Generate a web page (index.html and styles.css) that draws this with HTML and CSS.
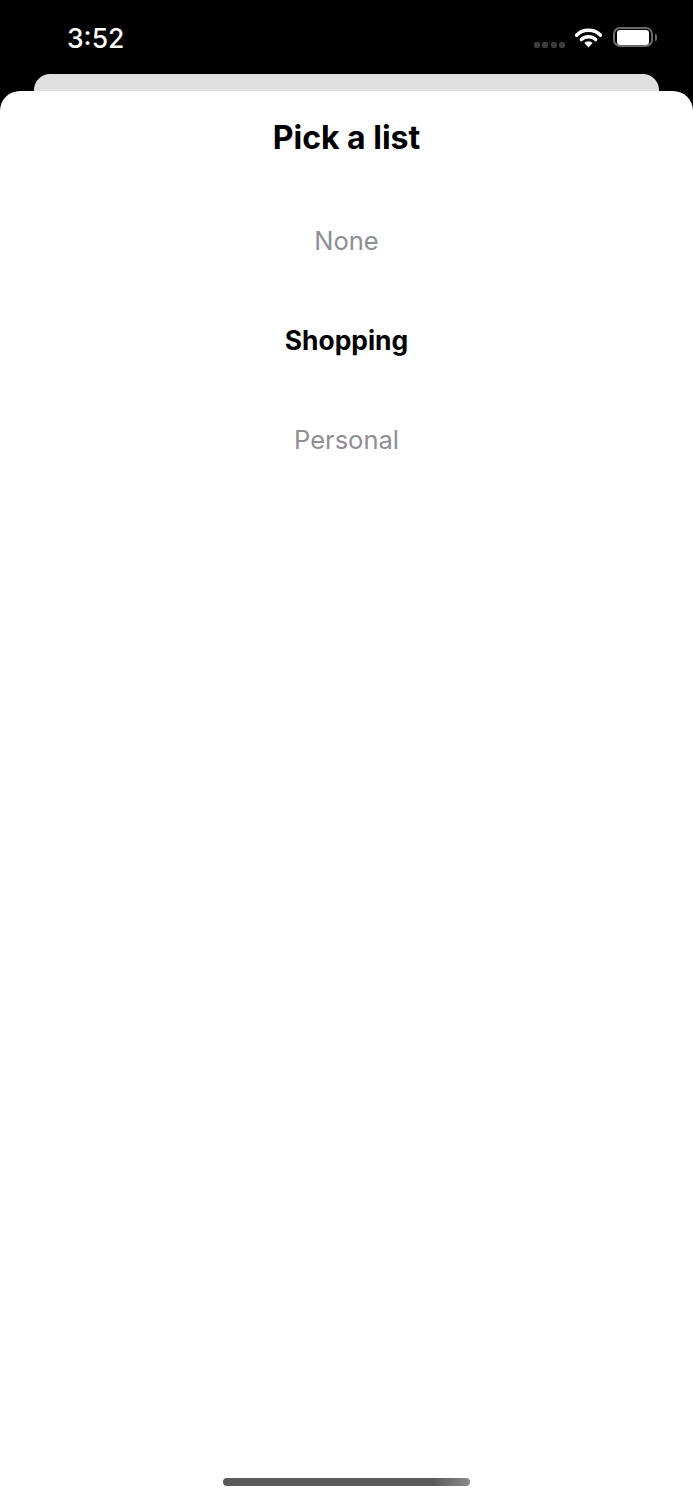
FILE: index.html
```html
<!DOCTYPE html>
<html>

  <head>
    <link rel="stylesheet" href="styles.css">
  </head>

  <body>
    <div class="status-bar">
      <span class="time">3:52</span>
      <div class="status-icons">
        <div class="signal">
          <span class="dot"></span>
          <span class="dot"></span>
          <span class="dot"></span>
          <span class="dot"></span>
        </div>
        <svg class="wifi" width="27" height="20" viewBox="0 0 27 20">
          <path d="M1.5 7.2 A17 17 0 0 1 25.5 7.2" fill="none" stroke="#fff" stroke-width="3.4" stroke-linecap="round"/>
          <path d="M6.3 11.6 A10.4 10.4 0 0 1 20.7 11.6" fill="none" stroke="#fff" stroke-width="3.4" stroke-linecap="round"/>
          <path d="M9.4 15 A5.8 5.8 0 0 1 17.6 15 L13.5 19.6 Z" fill="#fff"/>
        </svg>
        <div class="battery">
          <div class="battery-body">
            <div class="battery-fill"></div>
          </div>
          <div class="battery-cap"></div>
        </div>
      </div>
    </div>

    <div class="back-card"></div>

    <div class="sheet">
      <h1 class="sheet-title">Pick a list</h1>
      <div class="list-picker">
        <div class="list-option">None</div>
        <div class="list-option selected">Shopping</div>
        <div class="list-option">Personal</div>
      </div>
      <div class="home-indicator"></div>
    </div>
  </body>

</html>
```

FILE: styles.css
```css
body {
  margin: 0;
  height: 1500px;
  overflow: hidden;
  display: flex;
  flex-direction: column;
  background-color: #000;
  font-family: Inter, "Liberation Sans", sans-serif;
}

.status-bar {
  height: 74px;
  flex: none;
  display: flex;
  justify-content: space-between;
  padding: 0 36px 0 67px;
  box-sizing: border-box;
  color: #fff;
}

.time {
  font-size: 26.5px;
  font-weight: 500;
  line-height: 76px;
}

.status-icons {
  display: flex;
  align-items: center;
  height: 74px;
}

.signal {
  display: flex;
  gap: 2.3px;
  margin-top: 16px;
  margin-right: 10px;
}

.dot {
  width: 6px;
  height: 6px;
  border-radius: 2px;
  background-color: #3c3c3c;
}

.wifi {
  margin-right: 11px;
  margin-top: 1px;
}

.battery {
  display: flex;
  align-items: center;
}

.battery-body {
  width: 32px;
  height: 15px;
  border: 2px solid #6b6b6b;
  border-radius: 7px;
  padding: 0.5px 2px;
}

.battery-fill {
  height: 100%;
  background-color: #fff;
  border-radius: 3px;
}

.battery-cap {
  width: 2px;
  height: 7px;
  margin-left: 2px;
  background-color: #6b6b6b;
  border-radius: 0 2px 2px 0;
}

.back-card {
  height: 17px;
  flex: none;
  margin: 0 34px;
  background-color: #e0e0e0;
  border-radius: 16px 16px 0 0;
}

.sheet {
  flex: 1;
  display: flex;
  flex-direction: column;
  align-items: center;
  background-color: #fff;
  border-radius: 20px 20px 0 0;
}

.sheet-title {
  margin: 25px 0 0;
  font-size: 32px;
  font-weight: 700;
  line-height: 44px;
  color: #000;
}

.list-picker {
  flex: 1;
  margin-top: 31px;
  align-self: stretch;
}

.list-option {
  height: 99.5px;
  line-height: 99.5px;
  text-align: center;
  font-size: 25.5px;
  color: #8e8e93;
}

.list-option.selected {
  font-size: 26.4px;
  font-weight: 700;
  line-height: 98.5px;
  color: #000;
}

.home-indicator {
  width: 247px;
  height: 8px;
  flex: none;
  margin-bottom: 14px;
  border-radius: 4px;
  background: linear-gradient(90deg, #5a5a5a 0%, #5a5a5a 85%, #8a8a8a 100%);
}
```
